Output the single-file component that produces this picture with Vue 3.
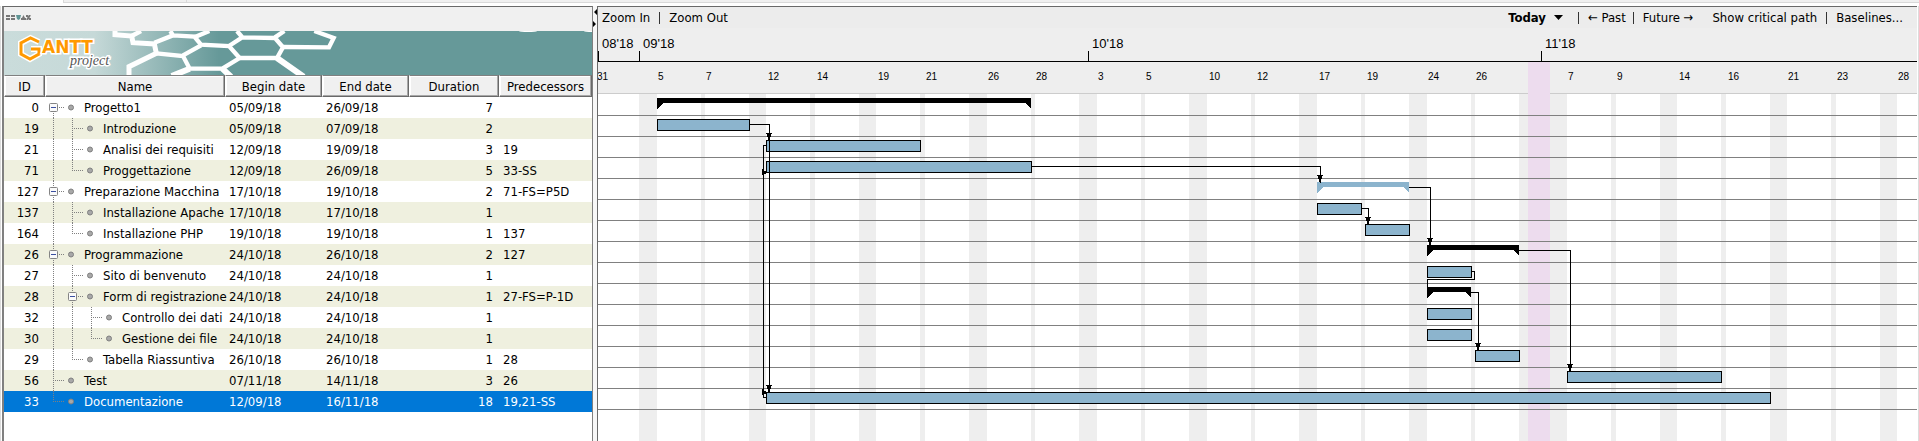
<script setup>
import { ref } from 'vue'

const rows = [
  { id: 0, name: 'Progetto1', depth: 0, begin: '05/09/18', end: '26/09/18', days: 7, pred: '', open: true, first: true, guides: [] },
  { id: 19, name: 'Introduzione', depth: 1, begin: '05/09/18', end: '07/09/18', days: 2, pred: '', guides: [0] },
  { id: 21, name: 'Analisi dei requisiti', depth: 1, begin: '12/09/18', end: '19/09/18', days: 3, pred: '19', guides: [0] },
  { id: 71, name: 'Proggettazione', depth: 1, begin: '12/09/18', end: '26/09/18', days: 5, pred: '33-SS', last: true, guides: [0] },
  { id: 127, name: 'Preparazione Macchina', depth: 0, begin: '17/10/18', end: '19/10/18', days: 2, pred: '71-FS=P5D', open: true, guides: [] },
  { id: 137, name: 'Installazione Apache', depth: 1, begin: '17/10/18', end: '17/10/18', days: 1, pred: '', guides: [0] },
  { id: 164, name: 'Installazione PHP', depth: 1, begin: '19/10/18', end: '19/10/18', days: 1, pred: '137', last: true, guides: [0] },
  { id: 26, name: 'Programmazione', depth: 0, begin: '24/10/18', end: '26/10/18', days: 2, pred: '127', open: true, guides: [] },
  { id: 27, name: 'Sito di benvenuto', depth: 1, begin: '24/10/18', end: '24/10/18', days: 1, pred: '', guides: [0] },
  { id: 28, name: 'Form di registrazione', depth: 1, begin: '24/10/18', end: '24/10/18', days: 1, pred: '27-FS=P-1D', open: true, guides: [0] },
  { id: 32, name: 'Controllo dei dati', depth: 2, begin: '24/10/18', end: '24/10/18', days: 1, pred: '', guides: [0, 1] },
  { id: 30, name: 'Gestione dei file', depth: 2, begin: '24/10/18', end: '24/10/18', days: 1, pred: '', last: true, guides: [0, 1] },
  { id: 29, name: 'Tabella Riassuntiva', depth: 1, begin: '26/10/18', end: '26/10/18', days: 1, pred: '28', last: true, guides: [0] },
  { id: 56, name: 'Test', depth: 0, begin: '07/11/18', end: '14/11/18', days: 3, pred: '26', guides: [] },
  { id: 33, name: 'Documentazione', depth: 0, begin: '12/09/18', end: '16/11/18', days: 18, pred: '19,21-SS', last: true, guides: [] }
]
const selected = ref(33)

const gx = (d) => 8 + 19 * d

// Timeline geometry: x from the chart's left edge, y from the top of the time scale.
const ROW = 21
const HEAD = 66
const months = [
  { x: 0, label: "08'18" },
  { x: 41, label: "09'18" },
  { x: 490, label: "10'18" },
  { x: 943, label: "11'18" }
]
const dayLabels = [
  [-1, 31], [60, 5], [108, 7], [170, 12], [219, 14], [280, 19], [328, 21], [390, 26], [438, 28],
  [500, 3], [548, 5], [611, 10], [659, 12], [721, 17], [769, 19], [830, 24], [878, 26],
  [970, 7], [1019, 9], [1081, 14], [1130, 16], [1190, 21], [1239, 23], [1300, 28]
]
const offDays = [
  [41, 18], [103, 4], [151, 17], [212, 5], [261, 17], [322, 5], [371, 18], [433, 4], [481, 18],
  [543, 4], [591, 18], [653, 4], [701, 18], [763, 4], [811, 18], [873, 4], [921, 48],
  [1013, 5], [1062, 17], [1123, 5], [1172, 17], [1233, 5], [1282, 17]
]
const tasks = [
  { row: 1, x: 59, w: 93 },
  { row: 2, x: 168, w: 155 },
  { row: 3, x: 168, w: 266 },
  { row: 5, x: 719, w: 45 },
  { row: 6, x: 767, w: 45 },
  { row: 8, x: 829, w: 45 },
  { row: 10, x: 829, w: 45 },
  { row: 11, x: 829, w: 45 },
  { row: 12, x: 877, w: 45 },
  { row: 13, x: 969, w: 155 },
  { row: 14, x: 168, w: 1005 }
]
const groups = [
  { row: 0, x: 59, w: 374, kind: 'dark' },
  { row: 4, x: 719, w: 92, kind: 'light' },
  { row: 7, x: 829, w: 92, kind: 'dark' },
  { row: 9, x: 829, w: 44, kind: 'dark' }
]
const top = (r) => HEAD + ROW * r + 4
const groupPath = (g) => {
  const y = top(g.row)
  const r = g.x + g.w
  return `M${g.x} ${y}H${r}V${y + 11}L${r - 6} ${y + 5}H${g.x + 6}L${g.x} ${y + 11}Z`
}
const links = [
  'M152 96.5H171.5V364',
  'M168 117.5H165.5V369.5H168',
  'M434 138.5H722.5V155',
  'M811 159.5H832.5V217',
  'M764 180.5H770.5V196',
  'M921 222.5H972.5V343',
  'M874 243.5H876.5V251.5H829.5V260',
  'M873 264.5H880.5V322'
]
const downArrows = [[171, 105], [171, 357], [722, 147], [832, 210], [770, 189], [972, 336], [880, 315]]
const rightArrows = [[164, 141], [164, 361]]
</script>

<template>
  <div class="app">
    <div class="tabs"><span class="tab-active"></span><span class="tab"></span><span class="tab wide"></span></div>
    <main class="split">
      <section class="tree-panel">
        <div class="tree-tools">
          <button aria-label="Unindent"><svg width="5" height="5"><path d="M0 1H4M0 4H4" class="ic" /></svg></button>
          <button aria-label="Indent"><svg width="5" height="5"><path d="M0 1H4M0 4H4" class="ic" /></svg></button>
          <button aria-label="Move down"><svg width="5" height="5"><path d="M0 0H5L4 4L2.500 5L1 4Z" fill="#5f9494" /></svg></button>
          <button aria-label="Move up"><svg width="5" height="5"><path d="M2.500 0L4 3H5V5H0V3H1Z" fill="#777" /></svg></button>
          <button aria-label="Link"><svg width="5" height="5"><path d="M0 1H2M3 4H5M1 5L4 0" class="ic" /></svg></button>
        </div>

        <svg class="banner" height="44" role="img" aria-label="GanttProject">
          <defs>
            <linearGradient id="fade" gradientUnits="userSpaceOnUse" x1="0" x2="215" y1="0" y2="0">
              <stop offset="0" stop-color="#cadcdb" />
              <stop offset=".42" stop-color="#c6d9d8" />
              <stop offset="1" stop-color="#669999" />
            </linearGradient>
          </defs>
          <rect width="100%" height="44" fill="url(#fade)" />
          <g transform="scale(.33333) translate(-9 -93)" class="honey">
            <path d="M342 93L342 104L392 108L396 128L460 132L466 160L384 200L384 226" stroke-width="15" />
            <path d="M392 108L420 93M460 128L516 106L508 93M516 106L580 110L600 134L684 138L716 174L664 206L566 206L546 168L466 160" stroke-width="13" />
            <path d="M546 166L600 136M580 112L625 93M684 138L724 112L708 93M724 112L822 114L846 142L828 174L716 174M822 112L850 93" stroke-width="13" />
            <path d="M846 141L984 142L998 114L940 93" stroke-width="13" />
            <path d="M566 206L512 228M664 206L690 230M828 174L908 230" stroke-width="18" />
          </g>
          <ellipse cx="524" cy="0" rx="9" ry="1" fill="#fff" />
          <ellipse cx="588" cy="0" rx="8" ry="1" fill="#fff" />
          <g class="mark">
            <path class="halo" d="M35 11L26.500 7L17 12V23L26 28L35 23V18H27" />
            <path class="core" d="M35 11L26.500 7L17 12V23L26 28L35 23V18H27" />
          </g>
          <text class="brand" x="38" y="22">ANTT</text>
          <text class="brand-sub" x="66" y="34">project</text>
        </svg>

        <table>
          <colgroup>
            <col class="c-id" /><col class="c-name" /><col class="c-begin" /><col class="c-end" /><col class="c-dur" /><col class="c-pred" />
          </colgroup>
          <thead>
            <tr><th>ID</th><th>Name</th><th>Begin date</th><th>End date</th><th>Duration</th><th>Predecessors</th></tr>
          </thead>
          <tbody>
            <tr v-for="r in rows" :key="r.id" :class="{ selected: r.id === selected }" @click="selected = r.id">
              <td class="num">{{ r.id }}</td>
              <td class="name">
                <div class="name-cell">
                  <svg :width="39 + 19 * r.depth" height="21" aria-hidden="true">
                    <g class="guide">
                      <path v-for="g in r.guides" :key="g" :d="`M${gx(g) + .5} 0V21`" />
                      <path :d="`M${gx(r.depth) + .5} ${r.first ? 10 : 0}V${r.last ? 10 : 21}`" />
                      <path :d="`M${gx(r.depth)} 10.500H${gx(r.depth) + 11}`" />
                    </g>
                    <g v-if="r.open">
                      <rect class="box" :x="gx(r.depth) - 3.5" y="6.500" width="8" height="8" rx="1" />
                      <path class="minus" :d="`M${gx(r.depth) - 2} 10.500h5`" />
                    </g>
                    <circle class="dot" :cx="gx(r.depth) + 18" cy="10.500" r="2.500" />
                  </svg>
                  <span>{{ r.name }}</span>
                </div>
              </td>
              <td>{{ r.begin }}</td>
              <td>{{ r.end }}</td>
              <td class="num">{{ r.days }}</td>
              <td>{{ r.pred }}</td>
            </tr>
          </tbody>
        </table>
      </section>

      <div class="divider">
        <svg width="4" height="24" aria-hidden="true"><path d="M4 3V9L1 6ZM0 15V21L3 18Z" /></svg>
      </div>

      <section class="chart-panel">
        <nav class="chart-tools">
          <button>Zoom In</button><i></i><button>Zoom Out</button>
          <span class="spacer"></span>
          <button class="today">Today <svg width="9" height="5" aria-hidden="true"><path d="M0 0H9L4.500 5Z" /></svg></button>
          <i></i><button>← Past</button><i class="tight"></i><button>Future →</button>
          <button class="critical">Show critical path</button><i></i><button>Baselines...</button>
        </nav>
        <svg class="chart" role="img" aria-label="Gantt chart">
          <rect width="100%" height="65" fill="#eeeeee" />
          <rect y="65" width="100%" height="1" fill="#cccccc" />
          <rect v-for="d in offDays" :key="d[0]" :x="d[0]" :y="HEAD" :width="d[1]" height="100%" fill="#eeeeee" />
          <rect x="930" y="34" width="22" height="100%" fill="#eddcee" />
          <rect y="33" width="100%" height="1" />
          <g v-for="m in months" :key="m.label">
            <rect :x="m.x" y="23" width="1" height="10" />
            <text class="month" :x="m.x + 4" y="20">{{ m.label }}</text>
          </g>
          <text v-for="d in dayLabels" :key="d[0]" class="day" :x="d[0]" y="52">{{ d[1] }}</text>
          <rect v-for="n in 15" :key="n" :y="HEAD + ROW * n" width="100%" height="1" fill="#808080" />
          <rect v-for="t in tasks" :key="t.row" class="task" :x="t.x + .5" :y="top(t.row) + .5" :width="t.w - 1" height="11" />
          <path v-for="g in groups" :key="g.row" :class="g.kind" :d="groupPath(g)" />
          <path v-for="l in links" :key="l" class="link" :d="l" />
          <path v-for="(a, i) in downArrows" :key="i" :d="`M${a[0] - 3} ${a[1]}h6v1h-1v3h-1v3h-2v-3h-1v-3h-1z`" />
          <path v-for="(a, i) in rightArrows" :key="'r' + i" :d="`M${a[0]} ${a[1]}v6h1v-1h3v-3h-3v-2z`" />
        </svg>
      </section>
    </main>
  </div>
</template>

<style>
html,
body,
#app {
  height: 100%;
  margin: 0;
}
</style>

<style scoped>
.app {
  display: flex;
  flex-direction: column;
  min-height: 100%;
  background: #fff;
  color: #000;
  font: 13px/21px "DejaVu Sans Condensed", "DejaVu Sans", sans-serif;
}
.tabs {
  display: flex;
  height: 3px;
  background: #f0f0f0;
}
.tabs span {
  box-sizing: border-box;
  border-bottom: 1px solid #d9d9d9;
}
.tabs .tab-active {
  width: 63px;
  background: #fff;
  border-bottom: 0;
}
.tabs .tab {
  width: 123px;
  border-left: 1px solid #d9d9d9;
}
.tabs .wide {
  flex: 1;
  border-left: 1px solid #d9d9d9;
}
.split {
  flex: 1;
  display: flex;
  box-sizing: border-box;
  margin-top: 3px;
  border-left: 1px solid #dcdcdc;
  border-right: 1px solid #dcdcdc;
  padding: 0 1px;
}
.tree-panel {
  flex: none;
  box-sizing: border-box;
  display: flex;
  flex-direction: column;
  border: 1px solid #808080;
  border-top-color: #696969;
  border-left: 2px solid #808080;
  border-bottom: 0;
}
.tree-tools {
  display: flex;
  align-items: center;
  height: 24px;
  box-sizing: border-box;
  padding: 0 2px 3px;
  background: #f0f0f0;
}
button {
  display: flex;
  align-items: center;
  margin: 0;
  padding: 0;
  border: 0;
  background: none;
  color: inherit;
  font: inherit;
  white-space: nowrap;
}
.ic {
  fill: none;
  stroke: #777;
  stroke-width: 2;
}
.banner {
  display: block;
  width: 100%;
}
.honey path {
  fill: none;
  stroke: #fff;
}
.mark path {
  fill: none;
}
.mark .halo {
  stroke: #fff;
  stroke-width: 6;
}
.mark .core {
  stroke: #ff9900;
  stroke-width: 3;
}
.brand {
  font: bold 17px "DejaVu Sans", sans-serif;
  fill: #ff9900;
  stroke: #fff;
  stroke-width: 3px;
  paint-order: stroke;
}
.brand-sub {
  font: italic 14px "Liberation Serif", serif;
  fill: #555;
  stroke: #fff;
  stroke-width: 3px;
  paint-order: stroke;
}
table {
  border-collapse: separate;
  border-spacing: 0;
  table-layout: fixed;
  width: 588px;
}
.c-id { width: 41px; }
.c-name { width: 180px; }
.c-begin { width: 97px; }
.c-end { width: 87px; }
.c-dur { width: 90px; }
.c-pred { width: 93px; }
th {
  box-sizing: border-box;
  height: 22px;
  padding: 1px 0 0;
  border: 1px solid #fff;
  border-top-color: #808080;
  border-right-color: #696969;
  border-bottom-color: #696969;
  background: #f0f0f0;
  box-shadow: inset -1px -1px #a8a8a8, inset 1px 1px #fff;
  font-weight: normal;
  line-height: 19px;
  text-align: center;
}
td {
  height: 21px;
  padding: 0 0 0 4px;
  white-space: nowrap;
}
td.num {
  padding: 0 6px 0 0;
  text-align: right;
}
td.name {
  padding: 0;
}
.name-cell {
  display: flex;
  height: 21px;
}
.name-cell svg {
  flex: none;
}
tbody tr:nth-child(even) {
  background: #eff0df;
}
tbody tr.selected {
  background: #0078d7;
  color: #fff;
}
.guide path {
  stroke: #808080;
  stroke-dasharray: 1 1;
}
.box {
  fill: #fafafa;
  stroke: #848484;
}
.minus {
  stroke: #3a4fa0;
}
.dot {
  fill: #a8a8a8;
  stroke: #808080;
}
.divider {
  flex: none;
  width: 4px;
  background: #f7f7f7;
}
.divider svg {
  display: block;
}
.chart-panel {
  flex: 1;
  min-width: 0;
  display: flex;
  flex-direction: column;
  border-top: 1px solid #696969;
  border-left: 1px solid #696969;
}
.chart-tools {
  display: flex;
  align-items: center;
  height: 21px;
  padding: 0 14px 0 4px;
  background: #ececec;
}
.chart-tools i {
  width: 1px;
  height: 12px;
  margin: 0 9px;
  background: #333;
}
.chart-tools .tight {
  margin-left: 7px;
}
.spacer {
  flex: 1;
}
.today {
  gap: 8px;
  margin-right: 6px;
  font-weight: bold;
}
.critical {
  margin-left: 19px;
}
.chart {
  display: block;
  flex: 1;
  width: 100%;
  min-height: 400px;
  shape-rendering: crispEdges;
}
.month {
  font: 13px "Liberation Sans", Arial, sans-serif;
}
.day {
  font: 10px "Liberation Sans", Arial, sans-serif;
}
.task {
  fill: #8cb4cd;
  stroke: #000;
}
.light {
  fill: #8cb4cd;
}
.link {
  fill: none;
  stroke: #000;
}
</style>
